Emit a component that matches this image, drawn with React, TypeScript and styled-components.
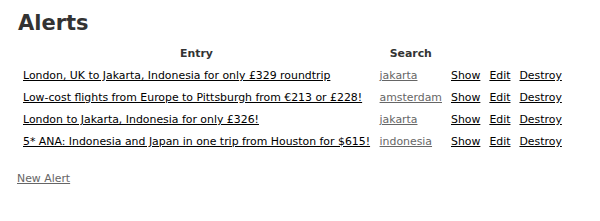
import React from "react";
import styled, { createGlobalStyle } from "styled-components";

const Global = createGlobalStyle`
  body {
    margin: 0;
    padding: 0 17px;
    background: #fff;
    color: #333;
    font-family: "DejaVu Sans", Verdana, sans-serif;
    font-size: 10.9px;
    line-height: 18px;
  }
`;

const Title = styled.h1`
  font-size: 21px;
  line-height: 28px;
  font-weight: bold;
  margin: 9px 0 5px 1px;
  color: #333;
`;

const Table = styled.table`
  border-spacing: 2px;
  margin: 0;
`;

const Th = styled.th`
  padding: 1px 4px;
  font-weight: bold;
  color: #333;
`;

const Td = styled.td<{ $tight?: boolean }>`
  padding: ${(p) => (p.$tight ? "1px 3.5px" : "1px 4px")};
  white-space: nowrap;
`;

const Link = styled.a<{ $visited?: boolean }>`
  color: ${(p) => (p.$visited ? "#666" : "#000")};
  text-decoration: underline;
`;

const Footer = styled.div`
  margin-top: 16px;
`;

const rows = [
  { entry: "London, UK to Jakarta, Indonesia for only £329 roundtrip", search: "jakarta" },
  { entry: "Low-cost flights from Europe to Pittsburgh from €213 or £228!", search: "amsterdam" },
  { entry: "London to Jakarta, Indonesia for only £326!", search: "jakarta" },
  { entry: "5* ANA: Indonesia and Japan in one trip from Houston for $615!", search: "indonesia" },
];

export default function App() {
  return (
    <>
      <Global />
      <Title>Alerts</Title>
      <Table>
        <thead>
          <tr>
            <Th>Entry</Th>
            <Th>Search</Th>
            <Th colSpan={3}></Th>
          </tr>
        </thead>
        <tbody>
          {rows.map((r, i) => (
            <tr key={i}>
              <Td><Link href="#">{r.entry}</Link></Td>
              <Td $tight><Link href="#" $visited>{r.search}</Link></Td>
              <Td $tight><Link href="#">Show</Link></Td>
              <Td $tight><Link href="#">Edit</Link></Td>
              <Td $tight><Link href="#">Destroy</Link></Td>
            </tr>
          ))}
        </tbody>
      </Table>
      <Footer>
        <Link href="#" $visited>New Alert</Link>
      </Footer>
    </>
  );
}
